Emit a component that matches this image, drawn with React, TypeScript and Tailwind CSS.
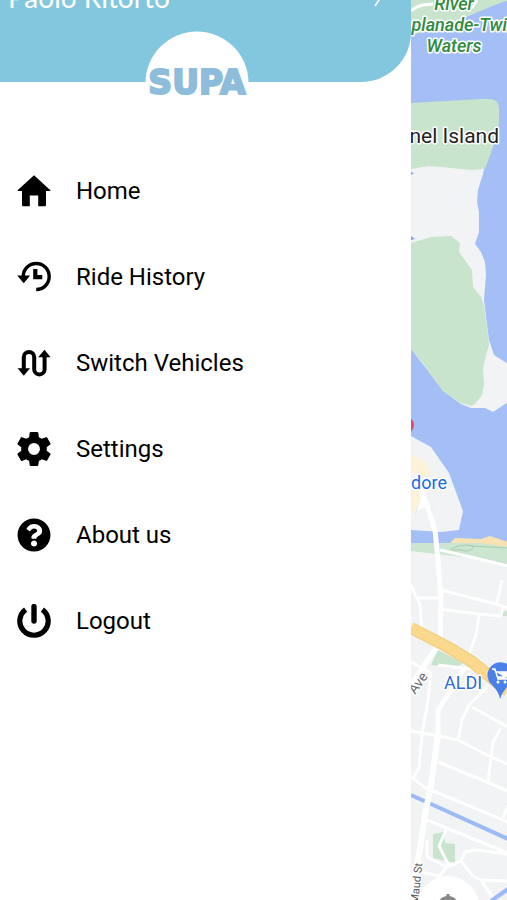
import type { ReactNode } from "react";
import { FaQuestionCircle } from "react-icons/fa";
import { IoSettingsSharp } from "react-icons/io5";

function HomeIcon() {
  return (
    <svg viewBox="0 0 34 34" className="size-[34px]" fill="currentColor" aria-hidden="true">
      <path d="M17 1.200 33.400 16.200q.4.800-.6.800H29v14q0 1.200-1.200 1.200H21.200V21.500h-8.400v10.700H6.200Q5 32.200 5 31V17H1.200q-1 0-.6-.800z" />
    </svg>
  );
}

function HistoryIcon() {
  return (
    <svg viewBox="0 0 34 34" className="size-[34px]" fill="none" stroke="currentColor" aria-hidden="true">
      <path d="M6.200 16.500a13 13 0 1 1 13 13" strokeWidth="3.400" />
      <path d="M.2 15.500h13L6.700 23.200z" fill="currentColor" stroke="none" />
      <path d="M18.300 9v8.200h7" strokeWidth="4.200" />
    </svg>
  );
}

function SwitchIcon() {
  return (
    <svg viewBox="0 0 34 34" className="size-[34px]" fill="none" stroke="currentColor" aria-hidden="true">
      <path d="M6.800 25V11.200a5.200 5.200 0 0 1 10.400 0v12a5.200 5.200 0 0 0 10.400 0V9" strokeWidth="4" />
      <path d="M.6 22.300h12.400L6.800 29.800zM21.200 11.200h12.400L27.500 3.800z" fill="currentColor" stroke="none" />
    </svg>
  );
}

function PowerIcon() {
  return (
    <svg viewBox="0 0 34 34" className="size-[34px]" fill="none" stroke="currentColor" aria-hidden="true">
      <path d="M8.600 5.600a14.200 14.200 0 1 0 16.800 0" strokeWidth="5.200" />
      <path d="M17 2.500v14.500" strokeWidth="5.400" strokeLinecap="round" />
    </svg>
  );
}

const items: { label: string; icon: ReactNode }[] = [
  { label: "Home", icon: <HomeIcon /> },
  { label: "Ride History", icon: <HistoryIcon /> },
  { label: "Switch Vehicles", icon: <SwitchIcon /> },
  { label: "Settings", icon: <IoSettingsSharp size={38} className="shrink-0" /> },
  { label: "About us", icon: <FaQuestionCircle size={34} /> },
  { label: "Logout", icon: <PowerIcon /> },
];

function Logo() {
  return (
    <svg
      viewBox="0 0 108 104"
      role="img"
      aria-label="SUPA"
      className="absolute top-[31px] left-[35%] h-[104px] w-[108px]"
    >
      <circle cx="53" cy="52" r="51.500" fill="#fff" />
      <text
        x="53"
        y="63"
        textAnchor="middle"
        className="font-['DejaVu_Sans',sans-serif] text-[33px] font-bold"
        fill="#8dbddb"
        stroke="#8dbddb"
        strokeWidth="2"
      >
        SUPA
      </text>
    </svg>
  );
}

function MapView() {
  return (
    <svg
      className="block h-full w-full bg-[#a3bff5] font-['Roboto',sans-serif]"
      role="img"
      aria-label="Map"
    >
      {/* esplanade and islands */}
      <path d="M0 0H97L84 5 60 15 30 28 0 35Z" fill="#c8e4cc" />
      <path d="M0 11Q7 4 22 4M66 0 61 8" fill="none" stroke="#fff" strokeWidth="3" />
      <path d="M0 165H74L72 174 67 190 66 202 68 212 68 232 64 244 70 252 74 262 75 275 73 300 78 340 83 355 97 364V402L82 412 74 408 60 408 50 404 32 391 18 372 0 349Z" fill="#f1f3f4" />
      <path d="M0 103 70 99H80Q88 100 88 108V122Q86 140 82 147L74 169 60 170 30 167 18 166 0 169Z" fill="#c8e4cc" />
      <path d="M0 243 20 237 40 236 49 243 48 252 61 270 62 287 70 297 73 305 77 335 78 345 75 355 72 368 73 385 71 395 64 404 60 406 50 403 42 398 32 391 10 361 0 349Z" fill="#c8e4cc" />
      <path d="M0 172l3 1-3 2zM0 236l4 3-4 1z" fill="#7fa3ee" />
      <circle cx="-6" cy="425" r="9" fill="#e04c6b" />
      {/* mainland */}
      <path d="M0 436 20 447 38 473 52 511 48 530 30 532 0 530Z" fill="#f1f3f4" />
      <path d="M0 455 12 460 20 472 14 477 0 472ZM0 485 10 490 11 502 4 510 0 513Z" fill="#fbf2d8" />
      <path d="M0 543H39L70 542 97 547V900H0Z" fill="#f1f3f4" />
      <path d="M0 543H39L70 541 97 545V567L60 558 0 551Z" fill="#cbe5d0" />
      <path d="M39 543 44 538 70 539 79 536 97 542V547L70 543Z" fill="#f8e2b2" />
      <path d="M39 550q10-7 23-4 2 4-8 5-8-3-14 1M60 546l37 2" fill="none" stroke="#a9ccb2" strokeWidth="1" />
      <path d="M20 665 27 650 52 663 47 667ZM92 612l5-2v6h-5zM22 834 33 832 34 843 44 844V863L22 858Z" fill="#c8e4cc" />
      <g fill="none" stroke="#fff" strokeLinejoin="round" strokeWidth="3">
        <path d="M29 550 60 557 97 566M30 590 85 604 97 608M29 609 67 614 90 616 92 607M5 598H29M0 585 9 605 11 632M91 580 86 603M68 615 65 635 57 657" />
        <path d="M0 662 20 673 17 700 11 735 8 768 2 778M60 669 27 665M77 686 58 705 51 720 47 740M61 707 97 727M0 731 28 736 47 740 80 757 97 764M90 728 82 742 77 782" />
        <path d="M27 762 76 782 97 791M0 777 15 788 97 822M97 805l-5 13M16 820 60 838 97 853M35 830 28 846 38 866M16 840V857L36 867 50 861 54 852 65 850 97 854M50 861 62 876 70 880 97 881M70 880 82 898M36 867 28 876 10 872" />
        <path d="M10 490 15 503 24 530 27 560 30 600 29 645" strokeWidth="5" />
        <path d="M25 648 0 685M53 668 40 690 27 710 27 740" strokeWidth="5" />
      </g>
      <path d="M4 513 11 502 22 510" fill="none" stroke="#e0e3e5" strokeWidth="1" />
      <path d="M10 498l8 5 2 6-6-2-8 4z" fill="#fff" />
      <path d="M0 628 35 646 60 661 97 691" fill="none" stroke="#f3cc78" strokeWidth="12" />
      <path d="M0 628 35 646 60 661 97 691" fill="none" stroke="#fad98f" strokeWidth="10" />
      <path d="M0 795 20 804 97 839M80 901 97 889" fill="none" stroke="#9cbaf5" strokeWidth="4" />
      <path d="M27 735 20 785 14 815 8 855 5 868 0 900" fill="none" stroke="#fff" strokeWidth="6" />
      {/* place labels */}
      <g stroke="#fff" strokeWidth="3" strokeLinejoin="round" paintOrder="stroke">
        <g className="text-[18px] font-medium italic" fill="#2f8a3e" textAnchor="middle">
          <text x="43" y="10">River</text>
          <text x="53" y="31">planade-Twin</text>
          <text x="43" y="52">Waters</text>
        </g>
        <text x="88" y="143" textAnchor="end" className="text-[21px]" fill="#1f2124">nel Island</text>
        <text x="36" y="489" textAnchor="end" className="text-[18px]" fill="#1a6be0">rdore</text>
        <text x="33" y="689" className="text-[18px]" fill="#2f6ae0">ALDI</text>
        <text transform="translate(4 695) rotate(-54)" className="text-[14px]" fill="#666a6e">Ave</text>
        <text transform="translate(7 904) rotate(-84)" className="text-[11px]" fill="#55595d">Maud St</text>
      </g>
      {/* supermarket pin */}
      <path d="M89 699Q88 692 81 685A13 13 0 1 1 98 685Q91 692 89 699Z" fill="#4b80e8" />
      <path d="M81 669h3l3 10h9M85 672h12l-2 5h-9" fill="#fff" stroke="#fff" strokeWidth="1.500" />
      <circle cx="87" cy="682" r="1.500" fill="#fff" />
      <circle cx="94" cy="682" r="1.500" fill="#fff" />
      {/* locate control */}
      <circle cx="37" cy="907" r="31" fill="#fff" />
      <circle cx="37" cy="907" r="11" fill="#888" />
      <path d="M37 894v6" stroke="#888" strokeWidth="3" />
    </svg>
  );
}

export default function App() {
  return (
    <div className="flex h-screen overflow-hidden bg-white font-['Roboto',sans-serif] text-black">
      <aside className="relative flex w-[81%] shrink-0 flex-col bg-white">
        <header className="h-[82px] shrink-0 overflow-hidden rounded-br-[50px] bg-[#83c7de]">
          <button
            type="button"
            className="-mt-[19px] flex w-full items-center justify-between pr-7 pl-2 text-left font-['Lato',sans-serif] text-[28px] leading-8 text-white"
          >
            <span>Paolo Ritorto</span>
            <svg viewBox="0 0 10 20" className="h-5 w-2.5" fill="none" stroke="currentColor" strokeWidth="1.500" aria-hidden="true">
              <path d="M2 1 8 10 2 19" />
            </svg>
          </button>
        </header>
        <Logo />
        <nav className="mt-[66px]">
          <ul>
            {items.map((item) => (
              <li key={item.label}>
                <button
                  type="button"
                  className="flex h-[86px] w-full items-center gap-6 px-4 text-left text-[24px] leading-8"
                >
                  <span className="flex w-9 justify-center">{item.icon}</span>
                  <span>{item.label}</span>
                </button>
              </li>
            ))}
          </ul>
        </nav>
      </aside>
      <main className="min-w-0 flex-1">
        <MapView />
      </main>
    </div>
  );
}
